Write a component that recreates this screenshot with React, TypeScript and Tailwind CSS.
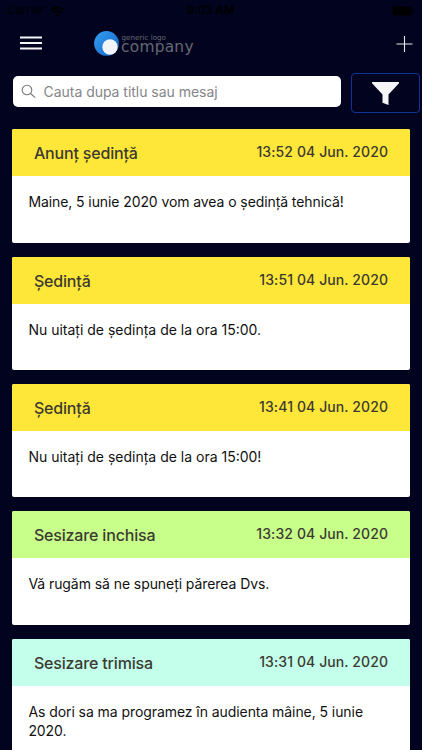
type Message = {
  title: string
  date: string
  body: string
  color: string
  tracking: string
}

const messages: Message[] = [
  { title: "Anunț ședință", date: "13:52 04 Jun. 2020", body: "Maine, 5 iunie 2020 vom avea o ședință tehnică!", color: "bg-[#ffe739]", tracking: "tracking-[-0.09px]" },
  { title: "Ședință", date: "13:51 04 Jun. 2020", body: "Nu uitați de ședința de la ora 15:00.", color: "bg-[#ffe739]", tracking: "tracking-normal" },
  { title: "Ședință", date: "13:41 04 Jun. 2020", body: "Nu uitați de ședința de la ora 15:00!", color: "bg-[#ffe739]", tracking: "tracking-normal" },
  { title: "Sesizare inchisa", date: "13:32 04 Jun. 2020", body: "Vă rugăm să ne spuneți părerea Dvs.", color: "bg-[#c8ff8b]", tracking: "tracking-[-0.07px]" },
  { title: "Sesizare trimisa", date: "13:31 04 Jun. 2020", body: "As dori sa ma programez în audienta mâine, 5 iunie 2020.", color: "bg-[#c3ffeb]", tracking: "tracking-[-0.07px]" },
]

function StatusBar() {
  return (
    <div className="flex h-[22px] shrink-0 items-center justify-between pl-[7px] pr-2 text-[11.5px] text-black">
      <div className="flex flex-1 items-center gap-[5px]">
        <span>Carrier</span>
        <svg className="h-[11px] w-[15px]" viewBox="0 0 15 11" fill="none" stroke="currentColor" strokeWidth="2.2">
          <path d="M1 4.2a9.2 9.2 0 0 1 13 0M3.4 6.8a5.8 5.8 0 0 1 8.2 0" />
          <path d="M7.5 11 5.4 8.7a3 3 0 0 1 4.2 0z" fill="currentColor" stroke="none" />
        </svg>
      </div>
      <span className="font-semibold">9:03 AM</span>
      <div className="flex flex-1 justify-end">
        <svg className="h-2.5 w-[23px]" viewBox="0 0 23 10">
          <rect x="1.5" y="0.5" width="19" height="9" rx="2" fill="black" />
          <path d="M21.8 3.2v3.6" stroke="black" />
        </svg>
      </div>
    </div>
  )
}

function Logo() {
  return (
    <svg className="h-7 w-[102px]" viewBox="0 0 102 28">
      <defs>
        <linearGradient id="logoBlue" x1="0" y1="0" x2="1" y2="1">
          <stop offset="0" stopColor="#35a0f4" />
          <stop offset="1" stopColor="#1262c4" />
        </linearGradient>
      </defs>
      <circle cx="12.5" cy="14.4" r="12.4" fill="url(#logoBlue)" />
      <circle cx="16" cy="18" r="7.7" fill="#f1f3f6" />
      <g fill="#666872" fontFamily="DejaVu Sans, sans-serif">
        <text x="27.5" y="11.4" fontSize="7.2" textLength="44.5">generic logo</text>
        <text x="27" y="23" fontSize="15.4" textLength="72.5">company</text>
      </g>
    </svg>
  )
}

function MessageCard({ title, date, body, color, tracking }: Message) {
  return (
    <div className="h-[113.3px] shrink-0 overflow-hidden rounded-[2px] bg-white">
      <div className={`flex h-[47px] items-start justify-between pl-[21.5px] pr-[21.5px] font-medium text-[#3c3a30] ${color}`}>
        <h2 className="pt-3 text-[16px] leading-6 tracking-[-0.17px]">{title}</h2>
        <span className="pt-3 text-[14px] leading-[22px] tracking-[0.1px]">{date}</span>
      </div>
      <p className={`px-4 pt-4 text-[14px] leading-[19px] text-[#111] ${tracking}`}>{body}</p>
    </div>
  )
}

export default function App() {
  return (
    <div className="flex h-[750px] w-[422px] flex-col overflow-hidden bg-[#02041f] font-['Inter',sans-serif]">
      <StatusBar />

      {/* Header */}
      <header className="flex h-[42px] shrink-0 items-center pl-5 pr-[9px]">
        <svg className="h-[14px] w-[22px]" viewBox="0 0 22 14" stroke="#f4f5f7" strokeWidth="2">
          <path d="M0 1.4h22M0 7h22M0 12.4h22" />
        </svg>
        <div className="ml-[52px] flex-1">
          <Logo />
        </div>
        <svg className="h-[17px] w-[17px]" viewBox="0 0 17 17" stroke="#e8e9ed" strokeWidth="1.1">
          <path d="M8.5 1v16M0.5 9h16" />
        </svg>
      </header>

      {/* Search */}
      <div className="mt-2 flex h-[42px] shrink-0 items-start pl-[12.5px] pr-[2px]">
        <div className="mt-[4.4px] flex h-[31px] w-[328px] items-center gap-2 rounded-[5px] bg-white pl-2">
          <svg className="h-[15px] w-[15px]" viewBox="0 0 15 15" fill="none" stroke="#77777b" strokeWidth="1.1">
            <circle cx="6" cy="6" r="4.8" />
            <path d="m9.5 9.5 4.7 4.2" />
          </svg>
          <span className="text-[14px] tracking-[-0.03px] text-[#858589]">Cauta dupa titlu sau mesaj</span>
        </div>
        <button className="ml-auto mt-px flex h-10 w-[69px] items-center justify-center rounded-[4px] border border-[#0f3695]">
          <svg className="h-[23px] w-[27px]" viewBox="0 0 27 23" fill="#f5f5f7">
            <path d="M0 0h27v1.3L16.5 12.5V23l-6-2.2v-8.3L0 1.3z" />
          </svg>
        </button>
      </div>

      {/* Messages */}
      <main className="flex shrink-0 flex-col gap-[14px] px-[12.4px] pt-[15.4px]">
        {messages.map((message) => (
          <MessageCard key={message.date} {...message} />
        ))}
      </main>
    </div>
  )
}
